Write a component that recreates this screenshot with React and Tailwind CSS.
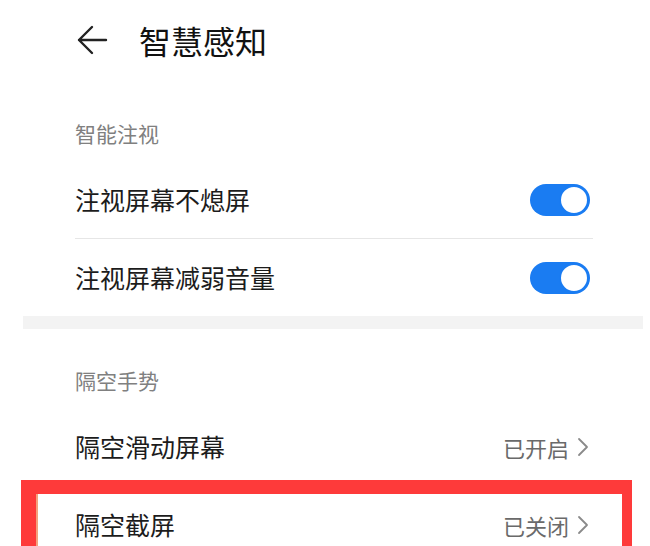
import React from 'react';

const FONT = "font-['Noto_Sans_CJK_SC','Noto_Sans',sans-serif]";

const Toggle = () => (
  <div className="relative w-[60px] h-[32px] rounded-full bg-[#1a7cf2]">
    <div className="absolute right-[1px] top-[1px] w-[30px] h-[30px] rounded-full bg-white border-2 border-[#1a7cf2]" />
  </div>
);

const Chevron = () => (
  <svg width="14" height="20" viewBox="0 0 14 20" fill="none" className="ml-[7px]">
    <path d="M3 2 L11 10 L3 18" stroke="#8a8a8a" strokeWidth="1.8" strokeLinecap="round" strokeLinejoin="round" />
  </svg>
);

const SectionLabel = ({ children, className = '' }) => (
  <div className={`h-[44px] flex items-center pl-[75px] text-[21px] text-[#808080] ${className}`}>
    {children}
  </div>
);

const Row = ({ label, right, divider, h = 'h-[78px]' }) => (
  <div className={`${h} relative flex items-center justify-between pl-[75px] pr-[60px]`}>
    <span className="text-[25px] text-[#1c1c1c]">{label}</span>
    {right}
    {divider && (
      <div className="absolute left-[75px] right-[57px] bottom-0 h-px bg-[#e6e6e6]" />
    )}
  </div>
);

const Status = ({ text }) => (
  <div className="flex items-center text-[22px] text-[#6a6a6a]">
    <span>{text}</span>
    <Chevron />
  </div>
);

export default function App() {
  return (
    <div className={`relative w-[650px] h-[546px] overflow-hidden bg-white ${FONT}`}>
      {/* HEADER */}
      <div className="h-[80px] flex items-center pl-[76px]">
        <svg width="32" height="32" viewBox="0 0 32 32" fill="none">
          <path d="M30 16 H3 M16 3 L3 16 L16 29" stroke="#222" strokeWidth="2.4" strokeLinecap="round" strokeLinejoin="round" />
        </svg>
        <h1 className="ml-[31px] text-[32px] font-normal text-[#111] leading-none">智慧感知</h1>
      </div>

      {/* 智能注视 */}
      <SectionLabel className="mt-[32px]">智能注视</SectionLabel>
      <div className="h-[5px]" />
      <Row label="注视屏幕不熄屏" right={<Toggle />} divider />
      <div className="h-[1px]" />
      <Row label="注视屏幕减弱音量" right={<Toggle />} h="h-[76px]" />

      {/* band */}
      <div className="h-[13px] ml-[23px] mr-[7px] bg-[#f3f3f3]" />

      {/* 隔空手势 */}
      <SectionLabel className="mt-[30px]">隔空手势</SectionLabel>
      <div className="h-[5px]" />
      <Row label="隔空滑动屏幕" right={<Status text="已开启" />} divider />
      <Row label="隔空截屏" right={<Status text="已关闭" />} />

      {/* annotation box */}
      <div className="absolute left-[21px] top-[480px] w-[611px] h-[100px] border-l-[15px] border-t-[14px] border-r-[10px] border-[#fe3a3a]">
        <div className="h-full w-[2px] bg-[#f4a27e]" />
      </div>
    </div>
  );
}
